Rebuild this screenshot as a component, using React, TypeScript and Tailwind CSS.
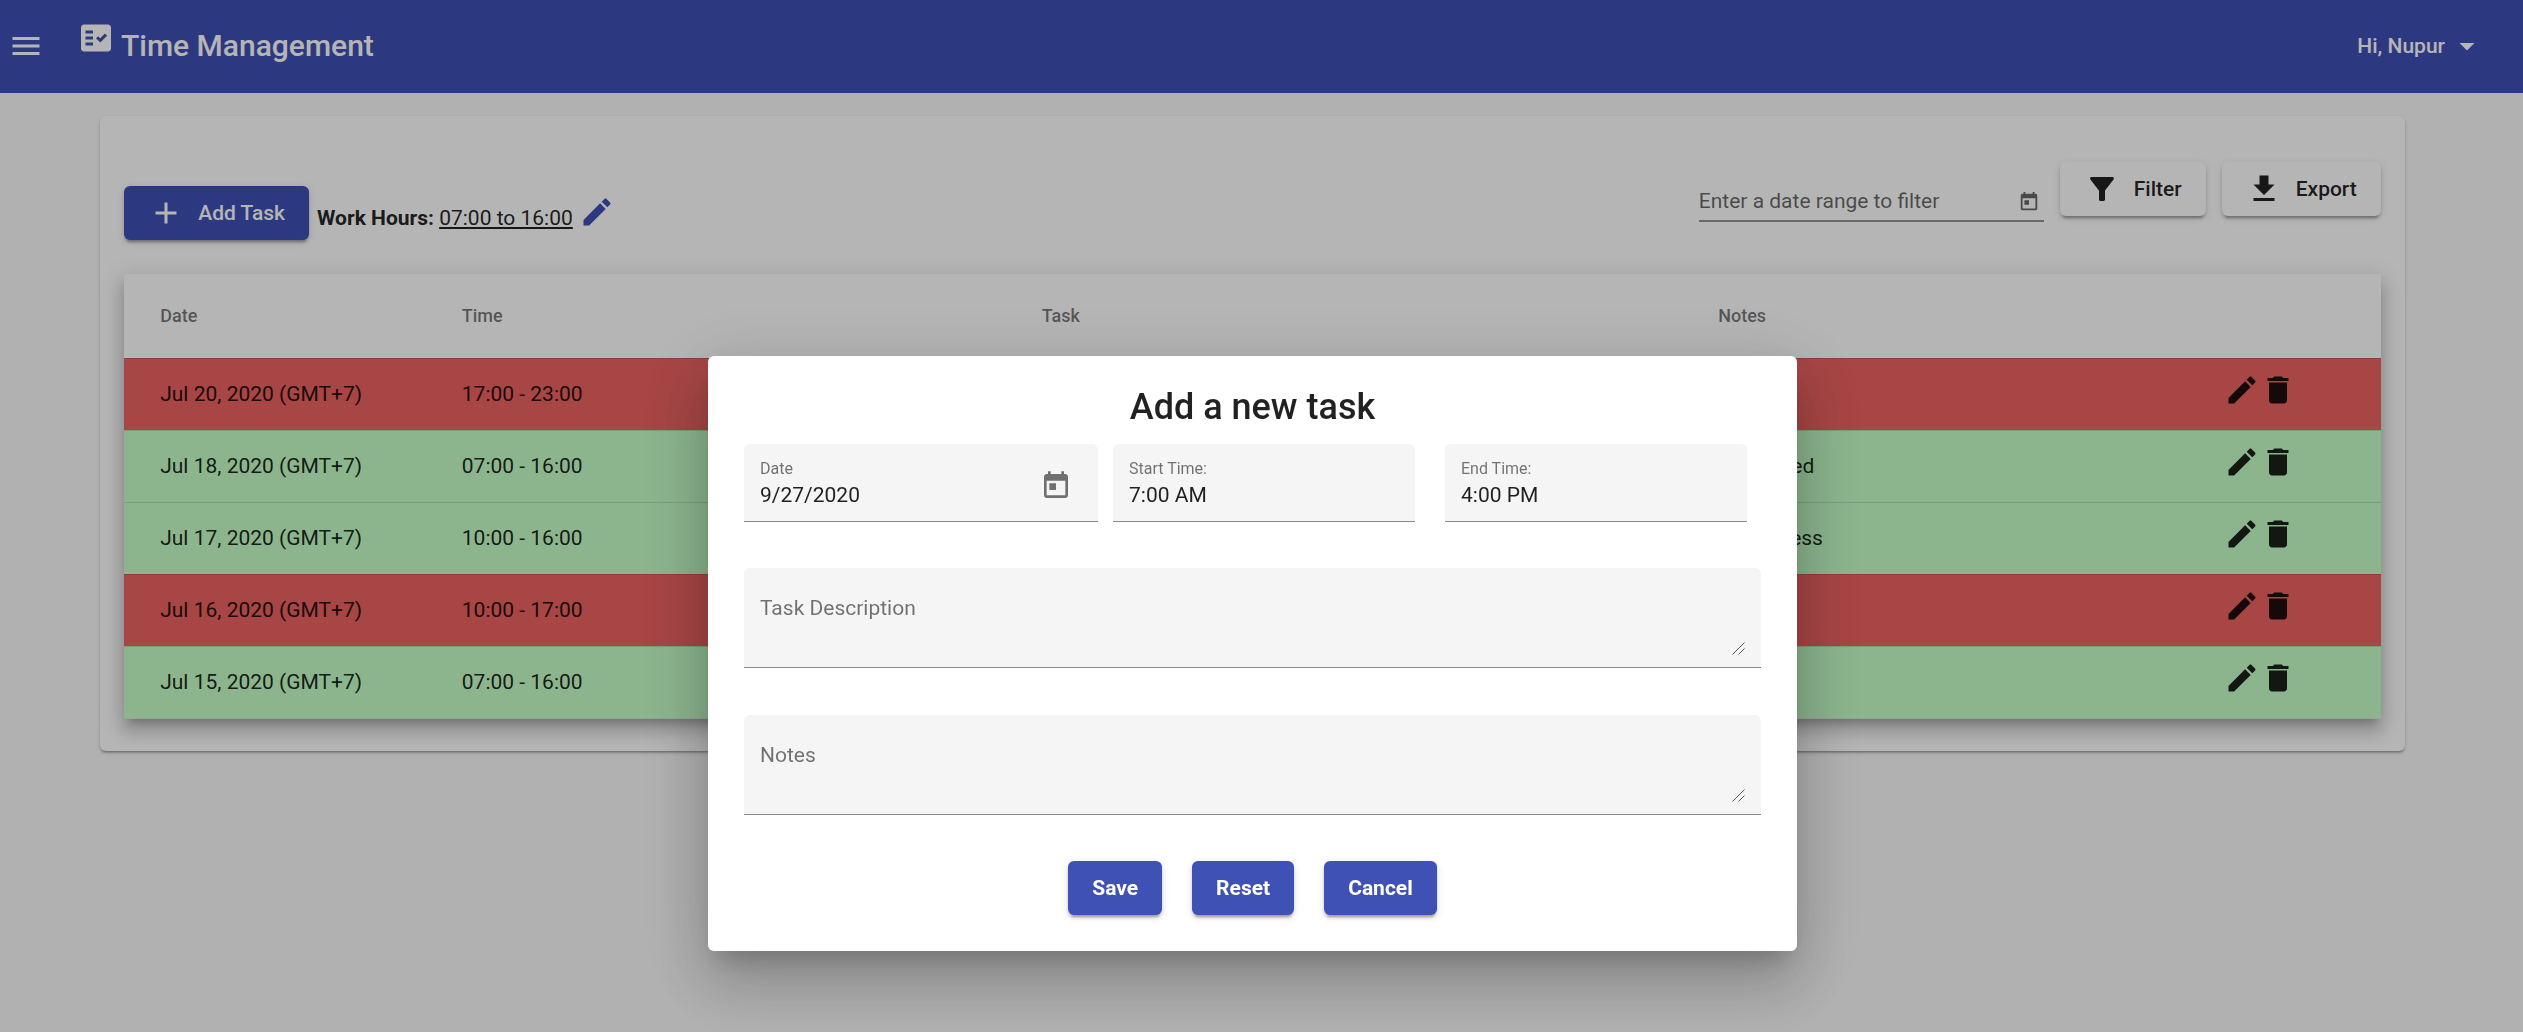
import React from "react";

const PATHS = {
  menu: "M3 18h18v-2H3v2zm0-5h18v-2H3v2zm0-7v2h18V6H3z",
  factCheck:
    "M20 3H4c-1.1 0-2 .9-2 2v14c0 1.1.9 2 2 2h16c1.1 0 2-.9 2-2V5c0-1.1-.9-2-2-2zM10 17H5v-2h5v2zm0-4H5v-2h5v2zm0-4H5V7h5v2zm4.82 6L12 12.16l1.41-1.41 1.41 1.42L17.99 9l1.42 1.42L14.82 15z",
  dropDown: "M7 10l5 5 5-5z",
  add: "M19 13h-6v6h-2v-6H5v-2h6V5h2v6h6v2z",
  edit: "M3 17.25V21h3.75L17.81 9.94l-3.75-3.75L3 17.25zM20.71 7.04c.39-.39.39-1.02 0-1.41l-2.34-2.34c-.39-.39-1.02-.39-1.41 0l-1.83 1.83 3.75 3.75 1.83-1.83z",
  trash: "M6 19c0 1.1.9 2 2 2h8c1.1 0 2-.9 2-2V7H6v12zM19 4h-3.5l-1-1h-5l-1 1H5v2h14V4z",
  calendar:
    "M19 3h-1V1h-2v2H8V1H6v2H5c-1.11 0-1.99.9-1.99 2L3 19c0 1.1.89 2 2 2h14c1.1 0 2-.9 2-2V5c0-1.1-.9-2-2-2zm0 16H5V8h14v11zM7 10h5v5H7z",
  filter:
    "M4.25 5.61C6.27 8.2 10 13 10 13v6c0 .55.45 1 1 1h2c.55 0 1-.45 1-1v-6s3.72-4.8 5.74-7.39c.51-.66.04-1.61-.79-1.61H5.04c-.83 0-1.3.95-.79 1.61z",
  download: "M19 9h-4V3H9v6H5l7 7 7-7zM5 18v2h14v-2H5z",
};

function Icon({ name, className = "size-9" }: { name: keyof typeof PATHS; className?: string }) {
  return (
    <svg viewBox="0 0 24 24" fill="currentColor" className={`shrink-0 ${className}`} aria-hidden="true">
      <path d={PATHS[name]} />
    </svg>
  );
}

const RAISED =
  "rounded-md h-[54px] px-6 shadow-[0_5px_2px_-3px_rgba(0,0,0,0.2),0_3px_3px_0_rgba(0,0,0,0.14),0_2px_8px_0_rgba(0,0,0,0.12)]";

const TASKS = [
  { date: "Jul 20, 2020 (GMT+7)", time: "17:00 - 23:00", notes: "", late: true },
  { date: "Jul 18, 2020 (GMT+7)", time: "07:00 - 16:00", notes: "Submitted", late: false },
  { date: "Jul 17, 2020 (GMT+7)", time: "10:00 - 16:00", notes: "In progress", late: false },
  { date: "Jul 16, 2020 (GMT+7)", time: "10:00 - 17:00", notes: "", late: true },
  { date: "Jul 15, 2020 (GMT+7)", time: "07:00 - 16:00", notes: "", late: false },
];

function Header() {
  return (
    <header className="flex h-[93px] items-center bg-[#3f51b5] pr-3.5 pb-0.5 pl-2 text-white">
      <button type="button" aria-label="Menu">
        <Icon name="menu" />
      </button>
      <div className="ml-[34px] flex items-center">
        <Icon name="factCheck" className="mb-4 size-9" />
        <h1 className="ml-[7px] text-[30px] leading-9 font-medium">Time Management</h1>
      </div>
      <button type="button" className="ml-auto flex items-center px-6 font-medium">
        Hi, Nupur
        <Icon name="dropDown" className="ml-1 size-9" />
      </button>
    </header>
  );
}

function Toolbar() {
  return (
    <div className="flex items-start justify-between">
      <div className="flex items-end pt-6">
        <button type="button" className={`${RAISED} flex items-center gap-3.5 bg-[#3f51b5] font-medium text-white`}>
          <Icon name="add" />
          Add Task
        </button>
        <p className="mb-[7px] ml-2 leading-[30px]">
          <b>Work Hours:</b> <span className="underline decoration-2 underline-offset-2">07:00 to 16:00</span>
        </p>
        <button type="button" aria-label="Edit work hours" className="mb-2.5 ml-1.5 text-[#3f51b5]">
          <Icon name="edit" />
        </button>
      </div>
      <div className="flex items-start gap-4">
        <div className="flex h-[60px] w-[345px] items-end border-b-2 border-black/42 pr-1 pb-[5px] text-black/60">
          <input
            aria-label="Date range"
            placeholder="Enter a date range to filter"
            className="h-7 min-w-0 flex-1 bg-transparent placeholder:text-black/60 focus:outline-none"
          />
          <button type="button" aria-label="Open calendar" className="mb-0.5">
            <Icon name="calendar" className="size-[22px]" />
          </button>
        </div>
        <button type="button" className={`${RAISED} flex items-center gap-3.5 bg-white font-medium`}>
          <Icon name="filter" />
          Filter
        </button>
        <button type="button" className={`${RAISED} flex items-center gap-3.5 bg-white font-medium`}>
          <Icon name="download" />
          Export
        </button>
      </div>
    </div>
  );
}

function TaskTable() {
  return (
    <table className="mt-[34px] w-full table-fixed border-separate border-spacing-0 border-b border-black/12 bg-white text-left shadow-[0_8px_8px_-5px_rgba(0,0,0,0.2),0_12px_15px_2px_rgba(0,0,0,0.14),0_5px_21px_3px_rgba(0,0,0,0.12)]">
      <colgroup>
        <col className="w-[14.96%]" />
        <col className="w-[25.7%]" />
        <col className="w-[29.98%]" />
        <col className="w-[22.4%]" />
        <col />
      </colgroup>
      <thead>
        <tr className="h-[84px] text-lg text-black/54">
          <th className="pl-9 font-medium">Date</th>
          <th className="font-medium">Time</th>
          <th className="font-medium">Task</th>
          <th className="font-medium">Notes</th>
          <th aria-label="Actions" />
        </tr>
      </thead>
      <tbody>
        {TASKS.map((t) => (
          <tr key={t.date} className={`h-[72px] *:border-t *:border-black/12 *:pb-0.5 ${t.late ? "bg-[#ed6262]" : "bg-[#c5ffc8]"}`}>
            <td className="pl-9">{t.date}</td>
            <td>{t.time}</td>
            <td />
            <td>{t.notes}</td>
            <td>
              <div className="mb-2 flex text-black/87">
                <button type="button" aria-label={`Edit ${t.date}`}>
                  <Icon name="edit" />
                </button>
                <button type="button" aria-label={`Delete ${t.date}`}>
                  <Icon name="trash" />
                </button>
              </div>
            </td>
          </tr>
        ))}
      </tbody>
    </table>
  );
}

function Field({ id, label, value, className, children }: { id: string; label: string; value: string; className: string; children?: React.ReactNode }) {
  return (
    <div className={`flex h-[78px] items-center rounded-t-md border-b border-[#8b8b8b] bg-[#f5f5f5] px-4 ${className}`}>
      <div className="min-w-0 flex-1 pt-1">
        <label htmlFor={id} className="block text-base leading-5 text-black/54">
          {label}
        </label>
        <input id={id} defaultValue={value} className="block h-8 w-full bg-transparent focus:outline-none" />
      </div>
      {children}
    </div>
  );
}

function TextArea({ label }: { label: string }) {
  return (
    <div className="relative flex h-[100px] rounded-t-md border-b border-[#8b8b8b] bg-[#f5f5f5] px-4 pt-6 pb-3">
      <textarea
        aria-label={label}
        placeholder={label}
        className="w-full resize-none bg-transparent leading-8 placeholder:text-black/54 focus:outline-none"
      />
      <svg viewBox="0 0 13 13" className="absolute right-4 bottom-3 size-[13px]" fill="none" stroke="#555" aria-hidden="true">
        <path d="M0.5 12.5l12-12M6.5 12.5l6-6" />
      </svg>
    </div>
  );
}

function TaskDialog() {
  return (
    <div className="fixed inset-0 flex items-start justify-center bg-black/29 pt-[356px] pr-[18px]">
      <form
        role="dialog"
        aria-labelledby="dialog-title"
        className="w-[1089px] rounded-md bg-white p-9 pt-[29px] shadow-[0_17px_23px_-11px_rgba(0,0,0,0.2),0_36px_57px_5px_rgba(0,0,0,0.14),0_14px_69px_12px_rgba(0,0,0,0.12)]"
      >
        <h2 id="dialog-title" className="text-center text-4xl leading-[44px] font-medium">
          Add a new task
        </h2>
        <div className="mt-[15px] flex">
          <Field id="date" label="Date" value="9/27/2020" className="w-[354px]">
            <button type="button" aria-label="Choose date" className="mt-1.5 mr-2.5 text-black/54">
              <Icon name="calendar" className="size-8" />
            </button>
          </Field>
          <Field id="start" label="Start Time:" value="7:00 AM" className="ml-[15px] w-[302px]" />
          <Field id="end" label="End Time:" value="4:00 PM" className="ml-[30px] w-[302px]" />
        </div>
        <div className="mt-[46px] flex flex-col gap-[47px]">
          <TextArea label="Task Description" />
          <TextArea label="Notes" />
        </div>
        <div className="mt-[46px] flex justify-center gap-[30px]">
          {["Save", "Reset", "Cancel"].map((t) => (
            <button key={t} type="button" className={`${RAISED} bg-[#3f51b5] font-bold text-white`}>
              {t}
            </button>
          ))}
        </div>
      </form>
    </div>
  );
}

export default function App() {
  return (
    <div className="min-h-screen bg-[#fafafa] font-[Roboto,sans-serif] text-[21px] leading-8 text-black/87">
      <Header />
      <main className="pt-[23px] pr-[18px]">
        <section className="mx-auto w-[92%] rounded-md bg-white px-6 pt-[46px] pb-8 shadow-[0_3px_2px_-2px_rgba(0,0,0,0.2),0_2px_2px_0_rgba(0,0,0,0.14),0_2px_5px_0_rgba(0,0,0,0.12)]">
          <Toolbar />
          <TaskTable />
        </section>
      </main>
      <TaskDialog />
    </div>
  );
}
